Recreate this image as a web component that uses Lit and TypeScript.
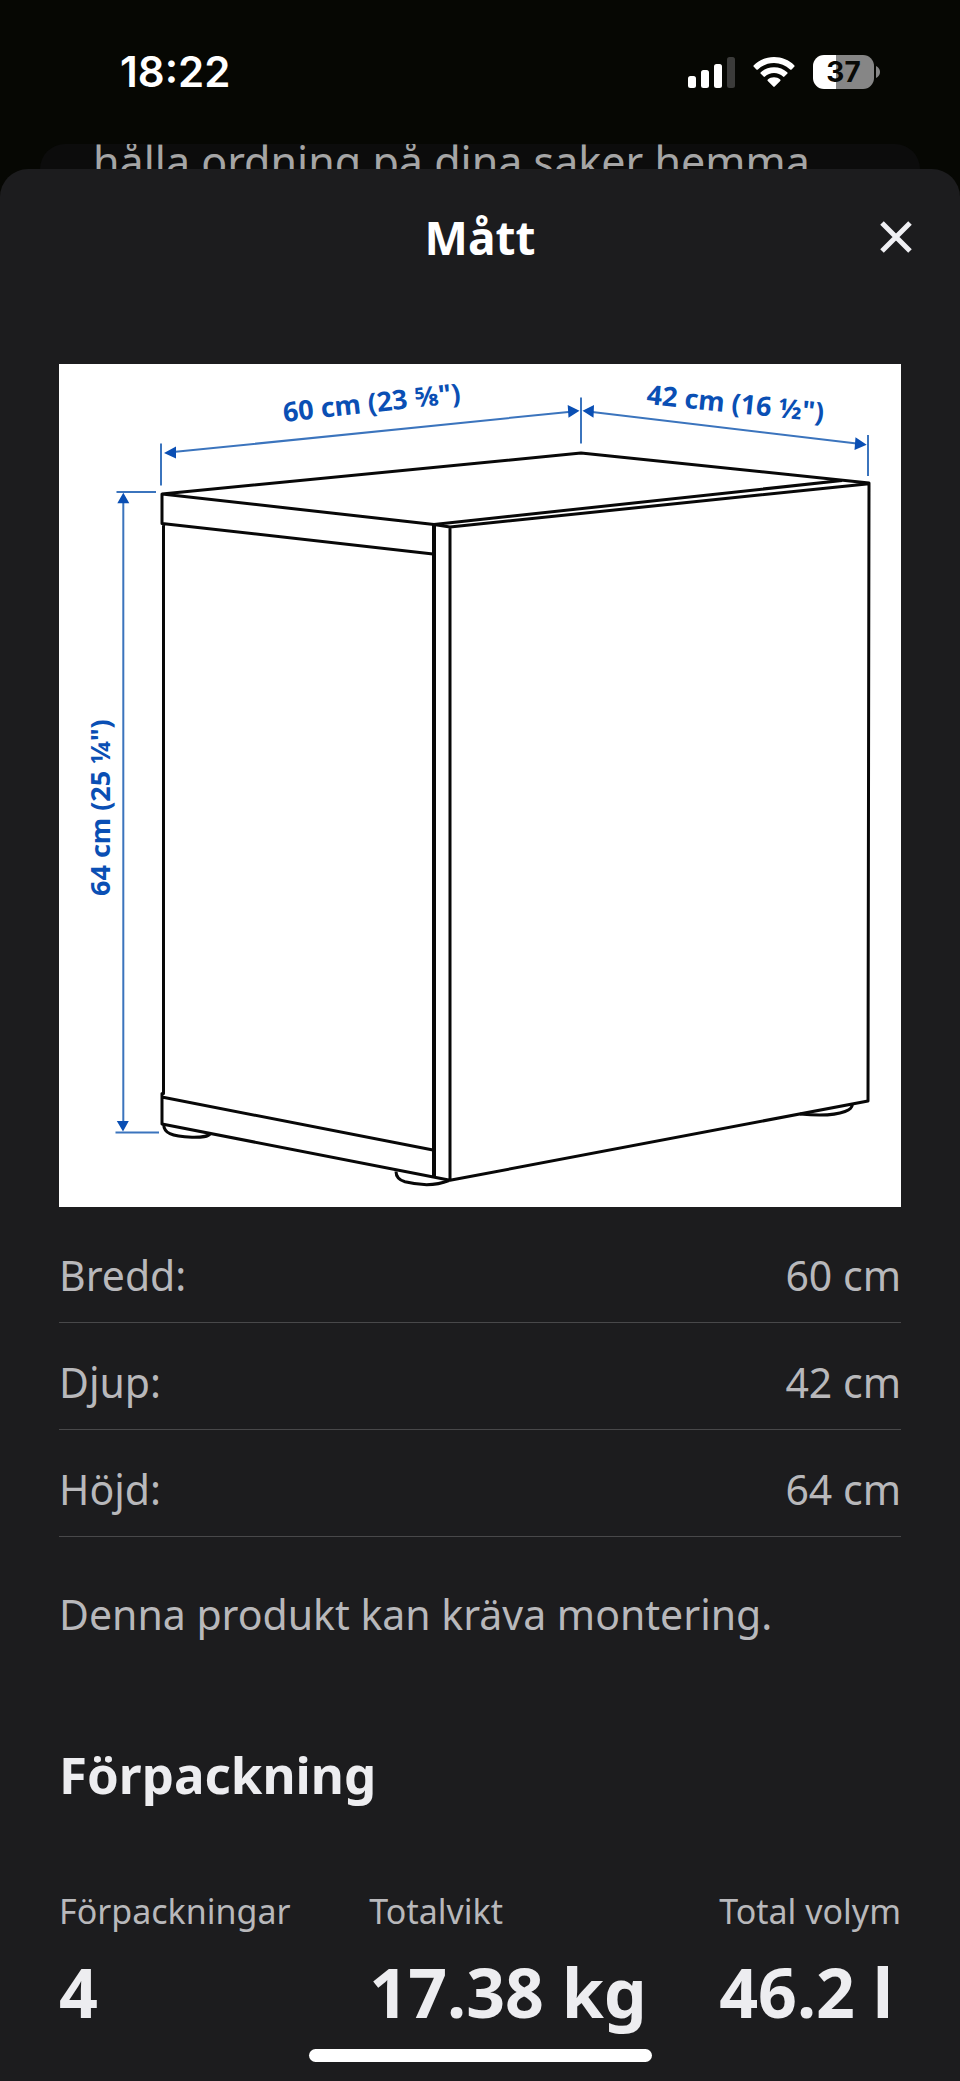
import { LitElement, html, css, svg } from "lit";
import { customElement, property } from "lit/decorators.js";

@customElement("status-bar")
class StatusBar extends LitElement {
  static styles = css`
    :host {
      display: flex;
      justify-content: space-between;
      align-items: center;
      box-sizing: border-box;
      height: 144px;
      padding: 0 80px 0 120px;
      color: #fff;
      font-family: Inter, "Liberation Sans", sans-serif;
    }
    .time {
      font-size: 42px;
      line-height: 52px;
      font-weight: 600;
    }
    .icons {
      display: flex;
      align-items: center;
      gap: 18px;
    }
    .icon {
      display: block;
    }
    .battery {
      display: flex;
      align-items: center;
      gap: 2px;
    }
    .level {
      width: 61px;
      height: 34px;
      border-radius: 11px;
      background: linear-gradient(90deg, #fff 37%, #868686 37%);
      color: #080906;
      font-size: 28px;
      line-height: 34px;
      font-weight: 700;
      text-align: center;
    }
  `;

  render() {
    return html`
      <time class="time">18:22</time>
      <div class="icons">
        <svg class="icon" width="47" height="31" viewBox="0 0 47 31" fill="#fff" aria-hidden="true">
          <rect x="0" y="19" width="8" height="12" rx="2.5" />
          <rect x="13" y="13" width="8" height="18" rx="2.5" />
          <rect x="26" y="7" width="8" height="24" rx="2.5" />
          <rect x="39" y="0" width="8" height="31" rx="2.5" fill="#3b3b3a" />
        </svg>
        <svg class="icon" width="42" height="31" viewBox="0 0 42 31" fill="#fff" aria-hidden="true">
          <path d="M21 0C13 0 6 3 .8 8.200a1 1 0 0 0 0 1.500l2.600 2.700a1 1 0 0 0 1.500 0C9.300 8.300 14.800 6 21 6s11.700 2.300 16.100 6.400a1 1 0 0 0 1.500 0l2.600-2.700a1 1 0 0 0 0-1.500C36 3 29 0 21 0Z" />
          <path d="M21 10.200c-5.100 0-9.700 1.900-13.200 5.100a1 1 0 0 0 0 1.500l2.800 2.800a1 1 0 0 0 1.400 0c2.400-2.200 5.500-3.500 9-3.500s6.600 1.300 9 3.500a1 1 0 0 0 1.400 0l2.800-2.800a1 1 0 0 0 0-1.500c-3.500-3.200-8.100-5.100-13.200-5.100Z" />
          <path d="M21 20.200c-2.400 0-4.500.8-6.200 2.200a1 1 0 0 0 0 1.500l5.500 5.700a1 1 0 0 0 1.400 0l5.500-5.700a1 1 0 0 0 0-1.500c-1.700-1.400-3.800-2.200-6.200-2.200Z" />
        </svg>
        <div class="battery">
          <span class="level">37</span>
          <svg class="icon" width="4" height="12" viewBox="0 0 4 12" aria-hidden="true">
            <path d="M0 0c2.400 1.100 4 3.400 4 6s-1.600 4.900-4 6Z" fill="#868686" />
          </svg>
        </div>
      </div>
    `;
  }
}

@customElement("cabinet-drawing")
class CabinetDrawing extends LitElement {
  static styles = css`
    :host {
      display: block;
      background: #fff;
    }
    .drawing {
      display: block;
      width: 100%;
      height: auto;
    }
    .edge {
      fill: none;
      stroke: #080808;
      stroke-width: 3;
      stroke-linejoin: round;
    }
    .thick {
      stroke-width: 4;
    }
    .guide {
      fill: none;
      stroke: #3b74bd;
      stroke-width: 2;
    }
    .arrow {
      fill: #0a4fb4;
    }
    .label {
      fill: #0a4fb4;
      font-family: "Noto Sans", sans-serif;
      font-size: 27px;
      font-weight: 700;
    }
  `;

  render() {
    return html`
      <svg class="drawing" viewBox="1 0 842 843" role="img" aria-label="Måttskiss">
        ${svg`
          <path class="edge" d="M104 130 523 89 811 119 810 737 392 816.300 104 760V729.500H105.500V159.500H104V130L376 160.500 784 116.500M104 159.500 375 190M376 160.500 392 163 811 119.700M392 163V816M105 733.300 375 786" />
          <path class="edge thick" d="M376 161V814" />
          <path class="edge" d="M105.700 760C105.500 769 113 772.500 134 773.300 144 773.500 150 773 153 769M338 807.500C338 813 341 816 347 817.800 364 822 380 821 391 816.500M742 750C762 752 778 751 787 747.500 792 745.500 794 744 794.500 740" />
          <path class="guide" d="M103 79.500V121.500M523 33.500V79.500M810 71V112M58.500 128H98M57.500 768.500H101M110 88.600 518 47.200M528 47.200 805 80.300M65.300 133V763" />
          <path class="arrow" d="M106 89 118 82.500V94.500ZM521.500 46.700 509.700 41 510.500 53.700ZM524.500 46.700 536 41 535.500 53.700ZM808.700 80.700 797.500 73.300 796.500 86ZM65.300 128.700 59.300 139.300H71.300ZM65 767.500 58.800 757H70.800Z" />
          <text class="label" transform="translate(226 58) rotate(-6.300)">60 cm (23 ⅝")</text>
          <text class="label" transform="translate(588 40) rotate(5.800)">42 cm (16 ½")</text>
          <text class="label" transform="translate(52 532) rotate(-90)">64 cm (25 ¼")</text>
        `}
      </svg>
    `;
  }
}

interface Entry {
  label: string;
  value: string;
}

@customElement("app-root")
class AppRoot extends LitElement {
  @property({ attribute: false }) measures: Entry[] = [
    { label: "Bredd:", value: "60 cm" },
    { label: "Djup:", value: "42 cm" },
    { label: "Höjd:", value: "64 cm" },
  ];

  @property({ attribute: false }) totals: Entry[] = [
    { label: "Förpackningar", value: "4" },
    { label: "Totalvikt", value: "17.38 kg" },
    { label: "Total volym", value: "46.2 l" },
  ];

  static styles = css`
    :host {
      display: flex;
      flex-direction: column;
      min-height: 100vh;
      background: #060703;
      color: #b8b8bb;
      font-family: "Noto Sans", sans-serif;
      font-size: 41px;
      line-height: 56px;
    }
    .behind {
      height: 25px;
      margin: 0 40px;
      padding: 0 53px;
      overflow: hidden;
      border-radius: 28px 28px 0 0;
      background: #0c0c0c;
      color: #a5a5a5;
      font-size: 43px;
      line-height: 42px;
      white-space: nowrap;
    }
    .behind-text {
      margin: -3px 0 0;
    }
    .sheet {
      display: flex;
      flex: 1;
      flex-direction: column;
      padding: 0 59px;
      border-radius: 28px 28px 0 0;
      background: #1c1c1e;
    }
    .header {
      display: grid;
      grid-template-columns: 1fr auto 1fr;
      align-items: center;
      height: 136px;
      margin: 0 -27px 59px;
    }
    .title {
      grid-column: 2;
      margin: 0;
      color: #fff;
      font-size: 46px;
      line-height: 64px;
      font-weight: 700;
    }
    .close {
      display: grid;
      place-items: center;
      justify-self: end;
      width: 64px;
      height: 64px;
      padding: 0;
      border: 0;
      background: none;
      color: #f0f0f4;
    }
    .measures {
      margin: 9px 0 0;
    }
    .measure {
      display: flex;
      justify-content: space-between;
      padding: 31px 0 19px;
      border-bottom: 1px solid #48484a;
    }
    dd {
      margin: 0;
    }
    .note {
      margin: 49px 0 0;
    }
    .section-title {
      margin: 96px 0 78px;
      color: #ededf0;
      font-size: 51px;
      line-height: 72px;
      font-weight: 700;
    }
    .totals {
      display: grid;
      grid-template-columns: 47fr 53fr auto;
      margin: 0;
      white-space: nowrap;
    }
    .total-label {
      font-size: 34px;
      line-height: 46px;
    }
    .total-value {
      margin-top: 11px;
      color: #ededf0;
      font-size: 68px;
      line-height: 94px;
      font-weight: 700;
    }
    .home {
      align-self: center;
      width: 343px;
      height: 13px;
      margin: auto 0 19px;
      border-radius: 7px;
      background: #fff;
    }
  `;

  render() {
    return html`
      <status-bar></status-bar>
      <div class="behind">
        <p class="behind-text">hålla ordning på dina saker hemma</p>
      </div>
      <main class="sheet">
        <header class="header">
          <h1 class="title">Mått</h1>
          <button class="close" type="button" aria-label="Stäng">
            <svg width="32" height="32" viewBox="0 0 32 32" aria-hidden="true">
              <path d="M2 2 30 30M30 2 2 30" fill="none" stroke="currentColor" stroke-width="5" />
            </svg>
          </button>
        </header>
        <cabinet-drawing></cabinet-drawing>
        <dl class="measures">
          ${this.measures.map(
            (m) => html`<div class="measure"><dt>${m.label}</dt><dd>${m.value}</dd></div>`
          )}
        </dl>
        <p class="note">Denna produkt kan kräva montering.</p>
        <h2 class="section-title">Förpackning</h2>
        <dl class="totals">
          ${this.totals.map(
            (t) => html`<div>
              <dt class="total-label">${t.label}</dt>
              <dd class="total-value">${t.value}</dd>
            </div>`
          )}
        </dl>
        <div class="home"></div>
      </main>
    `;
  }
}
